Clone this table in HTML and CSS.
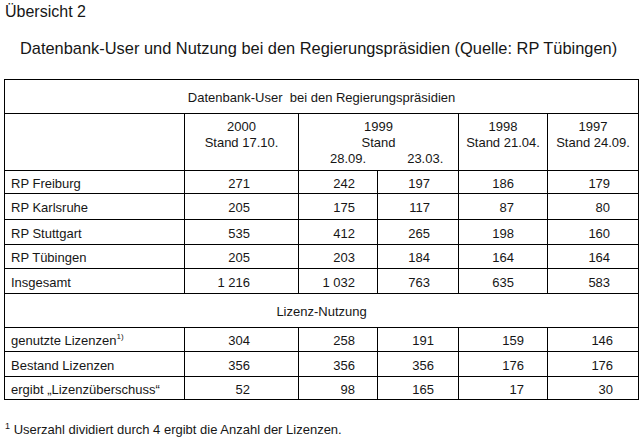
FILE: index.html
```html
<!DOCTYPE html>
<html lang="de">
<head>
<meta charset="utf-8">
<title>Übersicht 2</title>
<link rel="stylesheet" href="styles.css">
</head>
<body>
<div class="page">
  <div class="kicker">Übersicht 2</div>
  <div class="heading">Datenbank-User und Nutzung bei den Regierungspräsidien (Quelle: RP Tübingen)</div>
  <table class="data">
    <colgroup>
      <col class="c-label">
      <col class="c-2000">
      <col class="c-99a">
      <col class="c-99b">
      <col class="c-98">
      <col class="c-97">
    </colgroup>
    <tr class="section">
      <td colspan="6">Datenbank-User&nbsp; bei den Regierungspräsidien</td>
    </tr>
    <tr class="head">
      <td></td>
      <td>2000<br>Stand 17.10.</td>
      <td colspan="2">1999<br>Stand<div class="dates"><span>28.09.</span><span>23.03.</span></div></td>
      <td>1998<br>Stand 21.04.</td>
      <td>1997<br>Stand 24.09.</td>
    </tr>
    <tr class="row r1"><td class="lbl">RP Freiburg</td><td class="n n1">271</td><td class="n n2">242</td><td class="n n3">197</td><td class="n n4">186</td><td class="n n5">179</td></tr>
    <tr class="row r2"><td class="lbl">RP Karlsruhe</td><td class="n n1">205</td><td class="n n2">175</td><td class="n n3">117</td><td class="n n4">87</td><td class="n n5">80</td></tr>
    <tr class="row r3"><td class="lbl">RP Stuttgart</td><td class="n n1">535</td><td class="n n2">412</td><td class="n n3">265</td><td class="n n4">198</td><td class="n n5">160</td></tr>
    <tr class="row r4"><td class="lbl">RP Tübingen</td><td class="n n1">205</td><td class="n n2">203</td><td class="n n3">184</td><td class="n n4">164</td><td class="n n5">164</td></tr>
    <tr class="row r5"><td class="lbl">Insgesamt</td><td class="n n1">1 216</td><td class="n n2">1 032</td><td class="n n3">763</td><td class="n n4">635</td><td class="n n5">583</td></tr>
    <tr class="section section2">
      <td colspan="6">Lizenz-Nutzung</td>
    </tr>
    <tr class="row lic r6"><td class="lbl">genutzte Lizenzen<sup>1)</sup></td><td class="n n1">304</td><td class="n n2">258</td><td class="n n3">191</td><td class="n n4">159</td><td class="n n5">146</td></tr>
    <tr class="row lic r7"><td class="lbl">Bestand Lizenzen</td><td class="n n1">356</td><td class="n n2">356</td><td class="n n3">356</td><td class="n n4">176</td><td class="n n5">176</td></tr>
    <tr class="row lic r8"><td class="lbl">ergibt „Lizenzüberschuss“</td><td class="n n1">52</td><td class="n n2">98</td><td class="n n3">165</td><td class="n n4">17</td><td class="n n5">30</td></tr>
  </table>
  <div class="footnote"><sup>1</sup> Userzahl dividiert durch 4 ergibt die Anzahl der Lizenzen.</div>
</div>
</body>
</html>
```

FILE: styles.css
```css
html, body {
  margin: 0;
  padding: 0;
  background: #ffffff;
}
body {
  font-family: "Liberation Sans", Arial, sans-serif;
  color: #161616;
  width: 642px;
  height: 440px;
  overflow: hidden;
}
.page {
  padding: 3px 0 0 5px;
}
.kicker {
  font-size: 16px;
  line-height: 18px;
}
.heading {
  font-size: 16.4px;
  line-height: 18px;
  margin: 18px 0 0 15px;
}
.data {
  margin: 22px 0 0 -1px;
  border-collapse: collapse;
  table-layout: fixed;
  width: 634px;
  font-size: 13px;
  line-height: 15px;
}
.data td {
  border: 1px solid #000;
  padding: 0;
}
.c-label { width: 180px; }
.c-2000 { width: 114px; }
.c-99a { width: 79px; }
.c-99b { width: 81px; }
.c-98 { width: 89px; }
.c-97 { width: 91px; }

.section td {
  height: 32px;
  text-align: center;
  vertical-align: middle;
  padding-top: 1px;
}
.section2 td {
  height: 32px;
}
.head td {
  height: 51px;
  text-align: center;
  vertical-align: top;
  padding-top: 5px;
  line-height: 16px;
}
.dates {
  display: flex;
  gap: 41px;
  padding-left: 31px;
}
.row td {
  height: 20px;
  vertical-align: middle;
  padding-top: 2px;
}
.r2 td { height: 23px; }
.r3 td, .r5 td, .r7 td { height: 22px; }
.r4 td, .r6 td { height: 21px; }
.r8 td { height: 20px; }
.lbl {
  text-align: left;
  padding-left: 6px !important;
}
.lbl sup {
  font-size: 8px;
  vertical-align: 6px;
  line-height: 0;
}
.n { text-align: right; }
.n1 { padding-right: 48px !important; }
.n2 { padding-right: 22px !important; }
.n3 { padding-right: 28px !important; }
.n4 { padding-right: 33px !important; }
.n5 { padding-right: 28px !important; }
.lic .n3 { padding-right: 24px !important; }
.lic .n4 { padding-right: 23px !important; }
.lic .n5 { padding-right: 25px !important; }

.footnote {
  margin-top: 22px;
  font-size: 13px;
  line-height: 16px;
}
.footnote sup {
  font-size: 9px;
  vertical-align: 5px;
  line-height: 0;
}
```
